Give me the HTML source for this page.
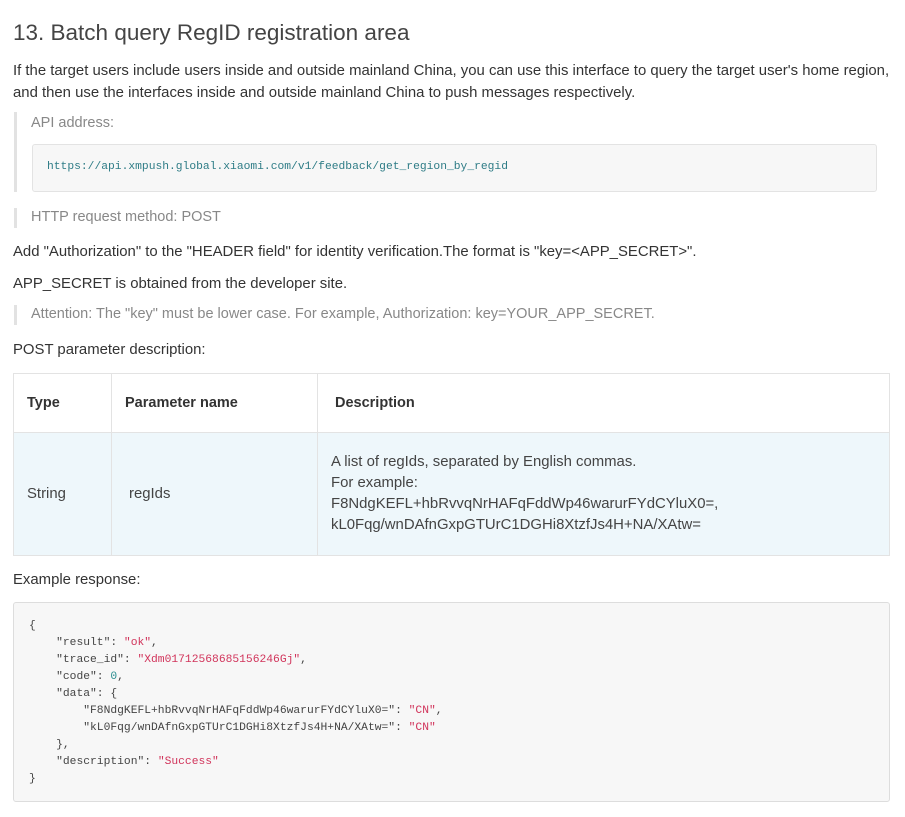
<!DOCTYPE html>
<html><head><meta charset="utf-8"><style>
*{margin:0;padding:0;box-sizing:border-box}
body{width:905px;height:817px;background:#fff;font-family:"Liberation Sans",sans-serif;color:#333;position:relative;overflow:hidden}
.a{position:absolute;white-space:nowrap}
.t{font-size:14.9px;color:#333}
.q{font-size:14.5px;color:#888}
.bar{position:absolute;left:14px;width:3px;background:#e2e2e2}
.mono{font-family:"Liberation Mono",monospace;font-size:11.3px}
.s{color:#d1345b}.n{color:#2a8e90}
table{position:absolute;left:13px;top:373px;width:877px;border-collapse:collapse;font-size:14.9px}
td{border:1px solid #e3e3e3;padding:0 13px}
</style></head><body>
<div class="a" style="left:13px;top:20px;font-size:22.5px;color:#444">13. Batch query RegID registration area</div>
<div class="a t" style="left:13px;top:63px">If the target users include users inside and outside mainland China, you can use this interface to query the target user's home region,</div>
<div class="a t" style="left:13px;top:85px">and then use the interfaces inside and outside mainland China to push messages respectively.</div>
<div class="bar" style="top:112px;height:80px"></div>
<div class="a q" style="left:31px;top:115px">API address:</div>
<div class="a" style="left:32px;top:144px;width:845px;height:48px;background:#f7f7f7;border:1px solid #e3e3e3;border-radius:3px"></div>
<div class="a mono" style="left:47px;top:161px;color:#2e7c86">https://api.xmpush.global.xiaomi.com/v1/feedback/get_region_by_regid</div>
<div class="bar" style="top:208px;height:20px"></div>
<div class="a q" style="left:31px;top:209px">HTTP request method: POST</div>
<div class="a t" style="left:13px;top:244px">Add "Authorization" to the "HEADER field" for identity verification.The format is "key=&lt;APP_SECRET&gt;".</div>
<div class="a t" style="left:13px;top:276px">APP_SECRET is obtained from the developer site.</div>
<div class="bar" style="top:305px;height:20px"></div>
<div class="a q" style="left:31px;top:306px">Attention: The "key" must be lower case. For example, Authorization: key=YOUR_APP_SECRET.</div>
<div class="a t" style="left:13px;top:342px">POST parameter description:</div>
<table>
<tr style="height:59px;font-weight:bold;color:#333;font-size:14.5px"><td style="width:98px">Type</td><td style="width:206px">Parameter name</td><td style="padding-left:17px">Description</td></tr>
<tr style="height:123px;background:#eef7fb;color:#444"><td>String</td><td style="padding-left:17px">regIds</td><td style="line-height:21px">A list of regIds, separated by English commas.<br>For example:<br>F8NdgKEFL+hbRvvqNrHAFqFddWp46warurFYdCYluX0=,<br>kL0Fqg/wnDAfnGxpGTUrC1DGHi8XtzfJs4H+NA/XAtw=</td></tr>
</table>
<div class="a t" style="left:13px;top:572px">Example response:</div>
<div class="a" style="left:13px;top:602px;width:877px;height:200px;background:#f7f7f7;border:1px solid #ddd;border-radius:3px"></div>
<pre class="mono" style="position:absolute;white-space:pre;left:29px;top:618px;line-height:17px;color:#444">{
    "result": <span class="s">"ok"</span>,
    "trace_id": <span class="s">"Xdm01712568685156246Gj"</span>,
    "code": <span class="n">0</span>,
    "data": {
        "F8NdgKEFL+hbRvvqNrHAFqFddWp46warurFYdCYluX0=": <span class="s">"CN"</span>,
        "kL0Fqg/wnDAfnGxpGTUrC1DGHi8XtzfJs4H+NA/XAtw=": <span class="s">"CN"</span>
    },
    "description": <span class="s">"Success"</span>
}</pre>
</body></html>
